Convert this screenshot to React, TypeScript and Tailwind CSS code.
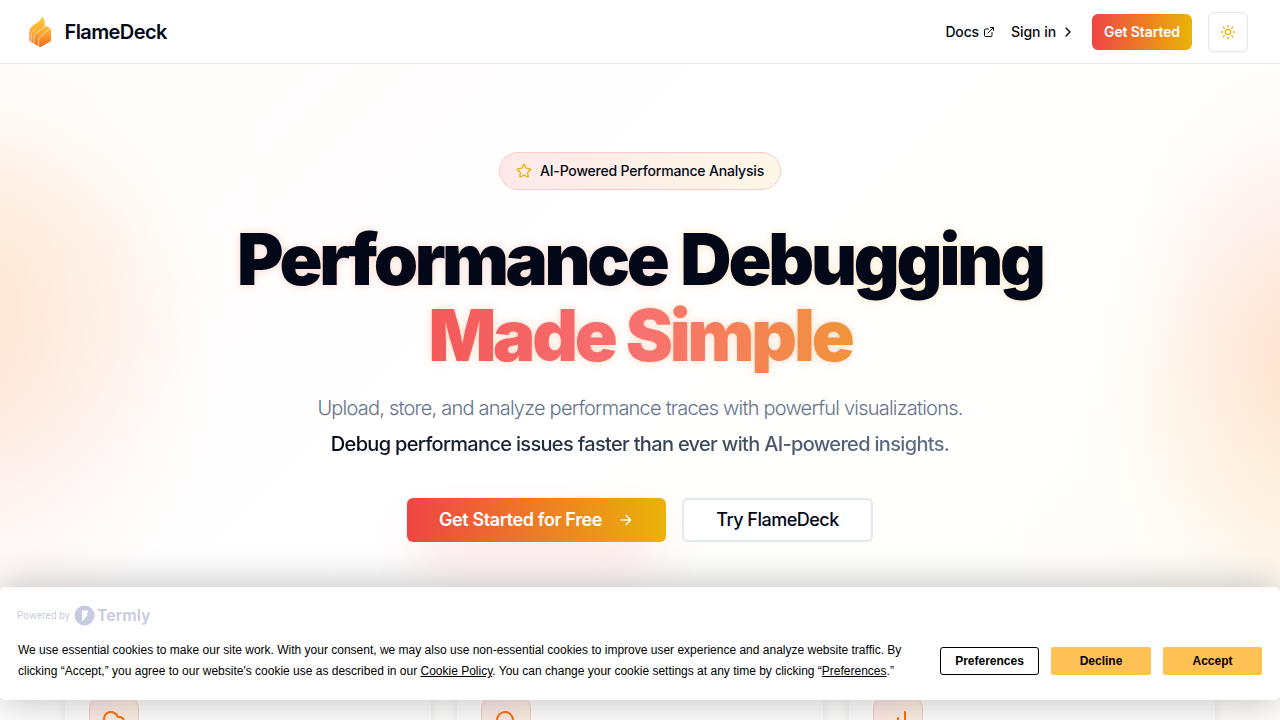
import { ArrowRight, ChartNoAxesColumnIncreasing, ChevronRight, CloudUpload, ExternalLink, Search, Star, Sun } from "lucide-react";

function FlameLogo() {
  return (
    <svg width="24" height="32" viewBox="0 0 24 32" aria-hidden="true">
      <defs>
        <linearGradient id="flame" x1="0" y1="0" x2="0" y2="1">
          <stop offset="0" stopColor="#fcc934" />
          <stop offset="0.45" stopColor="#fdaf30" />
          <stop offset="1" stopColor="#f36c21" />
        </linearGradient>
      </defs>
      <path
        fill="url(#flame)"
        d="M14 .5C16.800 3.500 17.600 7 16.300 11L18.500 10.400C19.500 10.300 20.500 11 21.400 11.700C22.500 12.500 23 13.300 23 14.500V24C23 24.800 22.700 25.300 22 25.700L13.200 30.800C12.600 31.100 12 31.100 11.400 30.800L2.400 25.800C1.700 25.400 1.300 24.800 1.300 24V17C1.300 12.500 3.500 10.500 6.500 8.300C10.500 5.500 13.500 4 14 .5z"
      />
      <path
        fill="none"
        stroke="#fff3df"
        strokeWidth="0.75"
        d="M3.100 26V19C3.100 17.500 3.600 16.600 5 15.600L8 13.500M5.800 27.500V21C5.800 19.500 6.500 18.400 7.800 17.400L16.300 11.200M10.600 30V24.500C10.600 22.800 11.200 21.700 12.500 20.500L21.800 12.500"
      />
    </svg>
  );
}

const features = [
  { name: "upload", Icon: CloudUpload },
  { name: "search", Icon: Search },
  { name: "metrics", Icon: ChartNoAxesColumnIncreasing },
];

function Header() {
  return (
    <header className="flex h-16 shrink-0 items-center justify-between border-b border-[#e2e8f0] bg-white pr-8 pl-7">
      <div className="flex items-center gap-3">
        <FlameLogo />
        <span className="pl-[0.5px] text-xl font-semibold tracking-[-0.6px]">FlameDeck</span>
      </div>
      <nav className="flex items-center gap-4 text-sm font-medium">
        <a className="flex items-center gap-1 tracking-[-0.15px]">
          Docs <ExternalLink size={12} />
        </a>
        <a className="flex items-center gap-1 tracking-[-0.05px]">
          Sign in <ChevronRight size={16} />
        </a>
        <button className="h-9 w-[100px] rounded-md bg-linear-to-r/srgb from-[#ef4444] to-[#eab308] font-semibold tracking-[-0.1px] text-white">Get Started</button>
        <button className="flex size-10 items-center justify-center rounded-md border border-[#e2e8f0] text-[#eab308] shadow-[0_1px_2px_rgba(0,0,0,0.05)]">
          <Sun size={16} />
        </button>
      </nav>
    </header>
  );
}

function CookieBanner() {
  return (
    <div className="absolute inset-x-0 bottom-5 h-[113px] rounded-[5px] bg-white px-[18px] pt-[17px] font-['Liberation_Sans',Arial,sans-serif] text-black shadow-[0_0_40px_rgba(0,0,0,0.27)]">
      <div className="-ml-px flex h-[22px] items-center text-[#c7cbe0]">
        <span className="w-[57px] font-[Roboto,sans-serif] text-[10px] tracking-[0.1px]">Powered by</span>
        <svg width="21" height="21" viewBox="0 0 21 21" aria-hidden="true">
          <circle cx="10.500" cy="10.500" r="10" fill="currentColor" />
          <path d="M8 5.500h6.500l-1.900 4h1.600L8.200 16.500z" fill="#fff" />
        </svg>
        <span className="ml-[2px] font-[Inter,sans-serif] text-[16px] font-semibold">Termly</span>
      </div>
      <div className="flex justify-between">
        <p className="mt-[14px] w-[900px] text-[12px] leading-[21px]">
          We use essential cookies to make our site work. With your consent, we may also use non-essential cookies to improve user experience and analyze website traffic. By
          <br />
          clicking “Accept,” you agree to our website's cookie use as described in our <a className="underline">Cookie Policy</a>. You can change your cookie settings at any time by clicking “
          <a className="underline">Preferences</a>.”
        </p>
        <div className="mt-[21px] flex gap-3 text-[12px] font-bold">
          <button className="h-7 w-[99px] rounded-[3px] border border-black">Preferences</button>
          <button className="h-7 w-[100px] rounded-[2px] bg-[#ffc154]">Decline</button>
          <button className="h-7 w-[99px] rounded-[2px] bg-[#ffc154]">Accept</button>
        </div>
      </div>
    </div>
  );
}

export default function App() {
  return (
    <div className="relative flex h-[720px] w-[1280px] flex-col overflow-hidden bg-white font-[Inter,sans-serif] text-[#020817]">
      <Header />
      <main className="flex flex-1 flex-col items-center bg-[radial-gradient(ellipse_250px_220px_at_-30px_210px,rgba(249,150,22,0.12),rgba(249,150,22,0.06)_45%,transparent),radial-gradient(ellipse_260px_270px_at_-40px_310px,rgba(244,100,50,0.13),rgba(244,100,50,0.06)_50%,transparent),radial-gradient(ellipse_180px_210px_at_1310px_200px,rgba(239,68,68,0.06),rgba(239,68,68,0.03)_50%,transparent),radial-gradient(ellipse_210px_240px_at_1310px_300px,rgba(249,115,22,0.15),rgba(249,115,22,0.06)_50%,transparent),radial-gradient(ellipse_250px_240px_at_1320px_400px,rgba(244,160,20,0.09),rgba(244,160,20,0.04)_50%,transparent),linear-gradient(135deg,#fffcfb,#ffffff_40%,#fffefa)] pt-22">
        <div className="flex h-[38px] w-[282px] shrink-0 items-center gap-2 rounded-full border border-[#fbcaca] bg-linear-to-r from-[#fde9ea] to-[#fdf7e6] px-4 text-sm font-medium tracking-[-0.19px] whitespace-nowrap">
          <Star size={16} className="shrink-0 text-[#eab308]" />
          AI-Powered Performance Analysis
        </div>
        <h1 className="mt-[31px] text-center text-[71px] leading-[76px] font-black tracking-[-3.4px]">
          <span className="flex justify-center gap-[14px]">
            <span className="[text-shadow:0_0_8px_rgba(244,90,50,0.25)]">Performance</span>
            <span className="tracking-[-3.2px] [text-shadow:0_0_8px_rgba(238,150,20,0.25)]">Debugging</span>
          </span>
          <span className="block bg-linear-to-r/srgb from-[#ef4444] via-[#f87171] to-[#eab308] bg-clip-text tracking-[-3.2px] text-transparent drop-shadow-[0_0_4px_rgba(249,115,22,0.25)]">Made Simple</span>
        </h1>
        <p className="mt-[17px] text-center text-xl leading-9 font-[340] tracking-[-0.78px] text-[#64748b]">
          Upload, store, and analyze performance traces with powerful visualizations.
          <br />
          <span className="bg-linear-to-r/srgb from-[#020817] to-[#64748b] bg-clip-text font-medium tracking-[-0.68px] text-transparent">
            Debug performance issues faster than ever with AI-powered insights.
          </span>
        </p>
        <div className="mt-9 flex gap-4 text-lg font-medium tracking-[-0.5px]">
          <button className="flex h-11 w-[259px] items-center justify-center gap-4 rounded-md bg-linear-to-r/srgb from-[#ef4444] to-[#eab308] font-semibold tracking-[-0.4px] text-white shadow-[0_25px_50px_-12px_rgba(239,68,68,0.25)]">
            Get Started for Free <ArrowRight size={16} />
          </button>
          <button className="h-11 w-[191px] rounded-md border-2 border-[#e2e8f0] bg-white">Try FlameDeck</button>
        </div>
        <section className="mt-[129px] grid h-[200px] w-[1150px] shrink-0 grid-cols-3 gap-[26px]">
          {features.map(({ name, Icon }) => (
            <div key={name} className="rounded-lg bg-white p-6 pt-[25px] shadow-[0_0_12px_rgba(0,0,0,0.08)]">
              <div className="flex size-[50px] items-center justify-center rounded-xl border border-[#fbcaca] bg-linear-to-br from-[#fde7e7] to-[#fdf5e0] text-[#f97316]">
                <Icon size={24} />
              </div>
            </div>
          ))}
        </section>
      </main>
      <CookieBanner />
    </div>
  );
}
